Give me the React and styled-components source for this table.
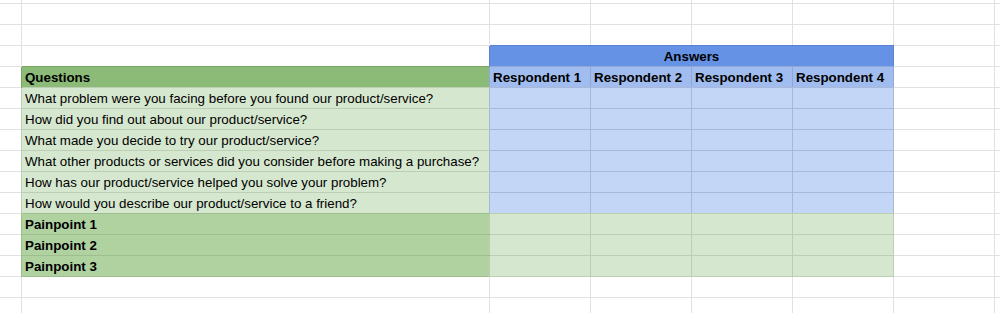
import React from "react";
import styled, { createGlobalStyle } from "styled-components";

const GlobalStyle = createGlobalStyle`
  html, body {
    margin: 0;
    padding: 0;
    background: #fff;
    overflow: hidden;
  }
`;

// fill colours as they look in the sheet, with the gridline tint each one gets
const fills = {
  none: { bg: "#ffffff", line: "#e1e1e1" },
  headGreen: { bg: "#8bbb77", line: "#78a665" },
  painGreen: { bg: "#b0d2a1", line: "#9dbf8e" },
  lightGreen: { bg: "#d6e7cf", line: "#bccfb5" },
  headBlue: { bg: "#6592e5", line: "#5a83cf" },
  subBlue: { bg: "#a1bdef", line: "#8fa8d8" },
  lightBlue: { bg: "#c4d6f6", line: "#a9b8d8" },
};

const Sheet = styled.div`
  display: grid;
  grid-template-columns: 22px 468px repeat(5, 101px) 101px;
  grid-auto-rows: 21px;
  grid-template-rows: 4px;
  width: 1000px;
  height: 313px;
  overflow: hidden;
  font-family: "Liberation Sans", Arial, sans-serif;
  font-size: 13.33px;
  color: #000;
`;

const Cell = styled.div`
  box-sizing: border-box;
  grid-column: span ${(p) => p.$span || 1};
  background: ${(p) => fills[p.$fill || "none"].bg};
  border-right: 1px solid ${(p) => fills[p.$fill || "none"].line};
  border-bottom: 1px solid ${(p) => fills[p.$fill || "none"].line};
  box-shadow: ${(p) =>
    p.$fill && p.$fill !== "none"
      ? `0 -1px 0 ${fills[p.$fill].line}, -1px 0 0 ${fills[p.$fill].line}`
      : "none"};
  display: flex;
  align-items: flex-end;
  justify-content: ${(p) => (p.$center ? "center" : "flex-start")};
  padding: 0 3px 2px;
  font-weight: ${(p) => (p.$bold ? 700 : 400)};
  line-height: 15px;
  white-space: nowrap;
  overflow: hidden;
`;

const questions = [
  "What problem were you facing before you found our product/service?",
  "How did you find out about our product/service?",
  "What made you decide to try our product/service?",
  "What other products or services did you consider before making a purchase?",
  "How has our product/service helped you solve your problem?",
  "How would you describe our product/service to a friend?",
];

const painpoints = ["Painpoint 1", "Painpoint 2", "Painpoint 3"];
const respondents = [1, 2, 3, 4];

const BlankRow = () => (
  <>
    <Cell />
    <Cell />
    <Cell />
    <Cell />
    <Cell />
    <Cell />
    <Cell />
    <Cell />
  </>
);

const App = () => (
  <>
    <GlobalStyle />
    <Sheet>
      <BlankRow />
      <BlankRow />
      <BlankRow />

      <Cell />
      <Cell />
      <Cell $fill="headBlue" $span={4} $center $bold>
        Answers
      </Cell>
      <Cell />
      <Cell />

      <Cell />
      <Cell $fill="headGreen" $bold>
        Questions
      </Cell>
      {respondents.map((n) => (
        <Cell key={n} $fill="subBlue" $bold>
          Respondent {n}
        </Cell>
      ))}
      <Cell />
      <Cell />

      {questions.map((q) => (
        <React.Fragment key={q}>
          <Cell />
          <Cell $fill="lightGreen">{q}</Cell>
          {respondents.map((n) => (
            <Cell key={n} $fill="lightBlue" />
          ))}
          <Cell />
          <Cell />
        </React.Fragment>
      ))}

      {painpoints.map((p) => (
        <React.Fragment key={p}>
          <Cell />
          <Cell $fill="painGreen" $bold>
            {p}
          </Cell>
          {respondents.map((n) => (
            <Cell key={n} $fill="lightGreen" />
          ))}
          <Cell />
          <Cell />
        </React.Fragment>
      ))}

      <BlankRow />
      <BlankRow />
    </Sheet>
  </>
);

export default App;
